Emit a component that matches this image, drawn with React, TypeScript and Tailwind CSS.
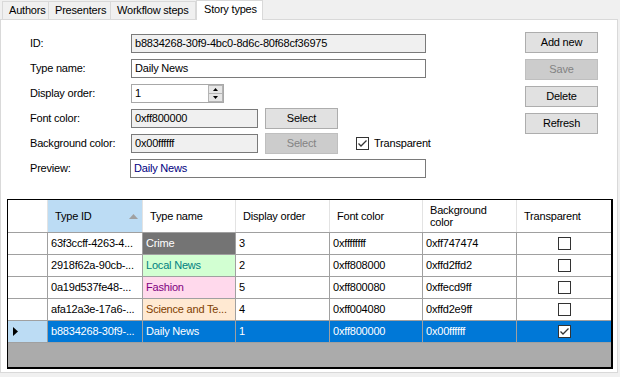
import React from "react";

const rows = [
  { id: "63f3ccff-4263-4...", name: "Crime", nbg: "bg-[#747474]", nfg: "text-white", order: "3", font: "0xffffffff", bg: "0xff747474", tr: false },
  { id: "2918f62a-90cb-...", name: "Local News", nbg: "bg-[#d2ffd2]", nfg: "text-[#008080]", order: "2", font: "0xff808000", bg: "0xffd2ffd2", tr: false },
  { id: "0a19d537fe48-...", name: "Fashion", nbg: "bg-[#ffd9ec]", nfg: "text-[#800080]", order: "5", font: "0xff800080", bg: "0xffecd9ff", tr: false },
  { id: "afa12a3e-17a6-...", name: "Science and Te...", nbg: "bg-[#ffe9d2]", nfg: "text-[#804000]", order: "4", font: "0xff004080", bg: "0xffd2e9ff", tr: false },
];

function Check({ checked }: { checked: boolean }) {
  return (
    <div className="w-[13px] h-[13px] border border-[#333333] bg-white flex items-center justify-center">
      {checked && (
        <svg width="11" height="11" viewBox="0 0 11 11">
          <polyline points="1.5,5.5 4,8 9.5,2.5" fill="none" stroke="#333333" strokeWidth="1.3" />
        </svg>
      )}
    </div>
  );
}

function Btn({ label, disabled }: { label: string; disabled?: boolean }) {
  return (
    <div
      className={
        disabled
          ? "w-[73px] h-[21px] flex items-center justify-center border border-[#bfbfbf] bg-[#cccccc] text-[#838383] shrink-0"
          : "w-[73px] h-[21px] flex items-center justify-center border border-[#adadad] bg-[#e1e1e1] text-black shrink-0"
      }
    >
      {label}
    </div>
  );
}

function Row({ label, children }: { label: string; children: React.ReactNode }) {
  return (
    <div className="flex items-center h-[19px]">
      <div className="w-[130px] pl-[29px] shrink-0">{label}</div>
      {children}
    </div>
  );
}

export default function App() {
  return (
    <div className="w-[620px] h-[377px] bg-[#f0f0f0] overflow-hidden font-['Liberation_Sans',Arial,sans-serif] text-[11px] tracking-[-0.2px] text-black leading-none whitespace-nowrap">
      {/* Tabs */}
      <div className="flex items-end h-[20px] pl-[2px] relative z-10">
        <div className="h-[18px] pl-[6px] flex items-center border border-b-0 border-[#d9d9d9] bg-[#f0f0f0] mb-[1px] w-[47px]">Authors</div>
        <div className="h-[18px] pl-[6px] flex items-center border border-b-0 border-l-0 border-[#d9d9d9] bg-[#f0f0f0] mb-[1px] w-[62px]">Presenters</div>
        <div className="h-[18px] pl-[6px] flex items-center border border-b-0 border-l-0 border-[#d9d9d9] bg-[#f0f0f0] mb-[1px] w-[85px]">Workflow steps</div>
        <div className="h-[20px] pl-[7px] pb-[3px] flex items-center border border-b-0 border-[#d9d9d9] bg-white w-[67px]">Story types</div>
      </div>
      {/* Panel */}
      <div className="w-[618px] h-[354px] -mt-[1px] bg-white border border-[#d9d9d9] flex flex-col">
        <div className="flex items-start">
          <div className="w-[524px] pt-[14px] flex flex-col gap-[6px] shrink-0">
            <Row label="ID:">
              <div className="w-[295px] h-[19px] border border-[#7a7a7a] bg-[#f0f0f0] flex items-center pl-[3px]">b8834268-30f9-4bc0-8d6c-80f68cf36975</div>
            </Row>
            <Row label="Type name:">
              <div className="w-[295px] h-[19px] border border-[#7a7a7a] bg-white flex items-center pl-[3px]">Daily News</div>
            </Row>
            <Row label="Display order:">
              <div className="w-[93px] h-[19px] border border-[#a8a8a8] bg-white flex">
                <div className="flex-1 flex items-center pl-[3px]">1</div>
                <div className="w-[15px] flex flex-col">
                  <div className="flex-1 bg-[#e6e6e6] border border-[#b4b4b4] flex items-center justify-center">
                    <svg width="5" height="3" viewBox="0 0 5 3"><polygon points="0,3 5,3 2.5,0" fill="#000" /></svg>
                  </div>
                  <div className="flex-1 bg-[#e6e6e6] border border-t-0 border-[#b4b4b4] flex items-center justify-center">
                    <svg width="5" height="3" viewBox="0 0 5 3"><polygon points="0,0 5,0 2.5,3" fill="#000" /></svg>
                  </div>
                </div>
              </div>
            </Row>
            <Row label="Font color:">
              <div className="w-[127px] h-[19px] border border-[#7a7a7a] bg-[#f0f0f0] flex items-center pl-[3px]">0xff800000</div>
              <div className="ml-[7px]"><Btn label="Select" /></div>
            </Row>
            <Row label="Background color:">
              <div className="w-[127px] h-[19px] border border-[#7a7a7a] bg-[#f0f0f0] flex items-center pl-[3px]">0x00ffffff</div>
              <div className="ml-[7px]"><Btn label="Select" disabled /></div>
              <div className="ml-[18px]"><Check checked /></div>
              <div className="ml-[5px]">Transparent</div>
            </Row>
            <Row label="Preview:">
              <div className="w-[296px] -ml-[1px] h-[19px] border border-[#7a7a7a] bg-white flex items-center pl-[3px] text-[#000080]">Daily News</div>
            </Row>
          </div>
          <div className="pt-[12px] flex flex-col gap-[6px]">
            <Btn label="Add new" />
            <Btn label="Save" disabled />
            <Btn label="Delete" />
            <Btn label="Refresh" />
          </div>
        </div>
        {/* Grid */}
        <div className="ml-[6px] mt-[21px] w-[606px] h-[170px] border-t border-l border-r-2 border-b-2 border-black bg-[#ababab] flex flex-col">
          <div className="grid grid-cols-[40px_95px_93px_94px_93px_94px_94px] h-[33px] bg-white border-b border-[#a0a0a0]">
            <div className="border-r border-[#e3e3e3]" />
            <div className="relative bg-[#bcdcf4] flex items-center pl-[7px] border-r border-[#e3e3e3]">
              Type ID
              <svg className="absolute right-[4px] top-[14px]" width="9" height="5" viewBox="0 0 9 5"><polygon points="0,5 9,5 4.5,0" fill="#a0a0a0" /></svg>
            </div>
            <div className="flex items-center pl-[7px] border-r border-[#e3e3e3]">Type name</div>
            <div className="flex items-center pl-[7px] border-r border-[#e3e3e3]">Display order</div>
            <div className="flex items-center pl-[7px] border-r border-[#e3e3e3]">Font color</div>
            <div className="flex items-center pl-[7px] border-r border-[#e3e3e3] leading-[12px]">Background<br />color</div>
            <div className="flex items-center pl-[7px]">Transparent</div>
          </div>
          {rows.map((r) => (
            <div key={r.id} className="grid grid-cols-[40px_95px_93px_94px_93px_94px_94px] h-[22px] bg-white border-b border-[#a0a0a0]">
              <div className="border-r border-[#a0a0a0]" />
              <div className="flex items-center pl-[3px] border-r border-[#a0a0a0]">{r.id}</div>
              <div className={`flex items-center pl-[3px] border-r border-[#a0a0a0] ${r.nbg} ${r.nfg}`}>{r.name}</div>
              <div className="flex items-center pl-[3px] border-r border-[#a0a0a0]">{r.order}</div>
              <div className="flex items-center pl-[3px] border-r border-[#a0a0a0]">{r.font}</div>
              <div className="flex items-center pl-[3px] border-r border-[#a0a0a0]">{r.bg}</div>
              <div className="flex items-center justify-center"><Check checked={r.tr} /></div>
            </div>
          ))}
          <div className="grid grid-cols-[40px_95px_93px_94px_93px_94px_94px] h-[22px] bg-[#0078d7] text-white border-b border-[#a0a0a0]">
            <div className="bg-[#bcdcf4] border-r border-[#a0a0a0] flex items-center pl-[5px]">
              <svg width="5" height="9" viewBox="0 0 5 9"><polygon points="0,0 5,4.5 0,9" fill="#000" /></svg>
            </div>
            <div className="flex items-center pl-[3px] border-r border-[#a0a0a0]">b8834268-30f9-...</div>
            <div className="flex items-center pl-[3px] border-r border-[#a0a0a0]">Daily News</div>
            <div className="flex items-center pl-[3px] border-r border-[#a0a0a0]">1</div>
            <div className="flex items-center pl-[3px] border-r border-[#a0a0a0]">0xff800000</div>
            <div className="flex items-center pl-[3px] border-r border-[#a0a0a0]">0x00ffffff</div>
            <div className="flex items-center justify-center"><Check checked /></div>
          </div>
        </div>
      </div>
    </div>
  );
}
